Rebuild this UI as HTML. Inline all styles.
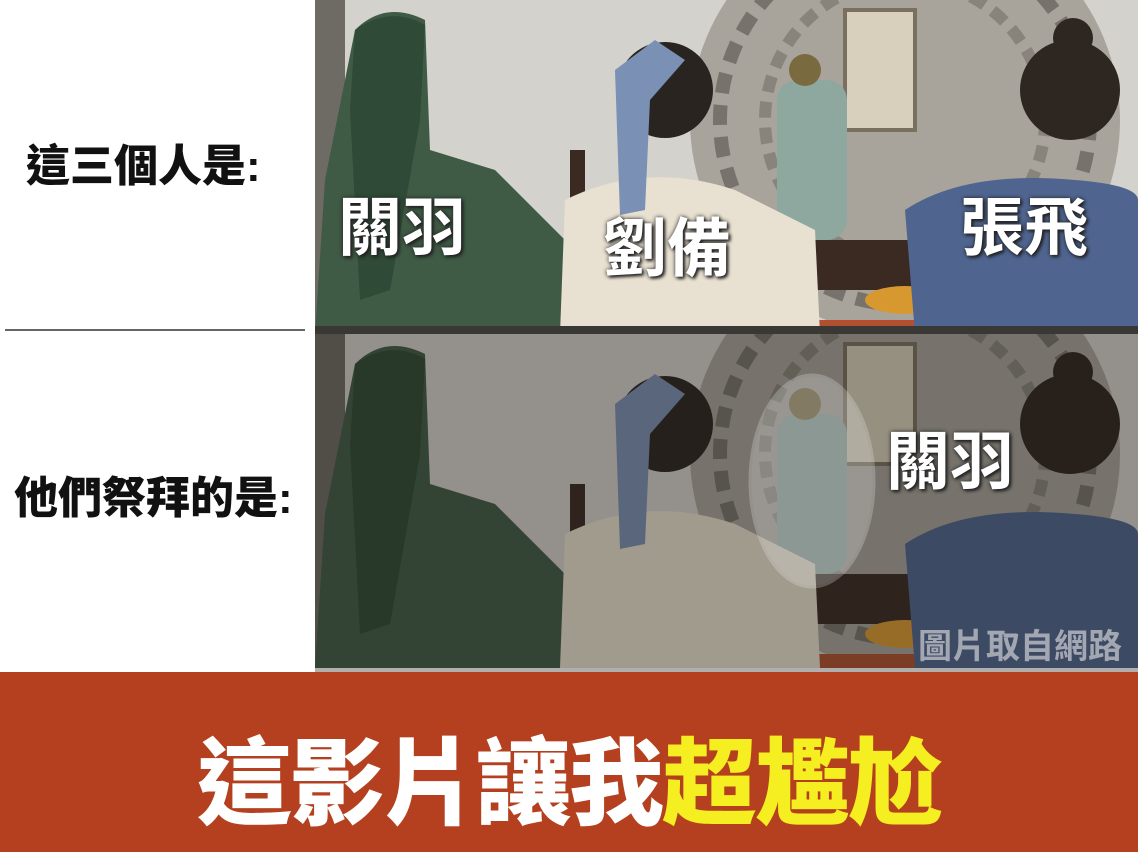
<!DOCTYPE html>
<html><head><meta charset="utf-8"><style>
html,body{margin:0;padding:0;}
body{width:1138px;height:852px;position:relative;overflow:hidden;background:#fff;font-family:"Liberation Sans","Noto Sans CJK TC",sans-serif;}
.lt{position:absolute;font-weight:900;color:#111;font-size:44px;line-height:1;white-space:nowrap;}
.lab{position:absolute;color:#fff;font-weight:700;font-size:64px;line-height:1;white-space:nowrap;text-shadow:0 0 4px #222,2px 2px 3px #222;}
.ban{position:absolute;left:0;top:672px;width:1138px;height:180px;background:#b5401f;}
.bt{position:absolute;left:0;width:1138px;top:738px;text-align:center;font-size:95px;font-weight:900;line-height:1;color:#fff;letter-spacing:-2px;white-space:nowrap;}
</style></head><body>
<div class="lt" style="left:26px;top:145px;">這三個人是:</div>
<div style="position:absolute;left:5px;top:329px;width:300px;height:2px;background:#666;"></div>
<div class="lt" style="left:14px;top:477px;">他們祭拜的是:</div>

<svg width="823" height="672" style="position:absolute;left:315px;top:0" viewBox="0 0 823 672">
<defs>
<clipPath id="cp"><rect x="0" y="0" width="823" height="334"/></clipPath>
<g id="scene">
<rect x="0" y="0" width="823" height="334" fill="#d4d2cc"/>
<rect x="0" y="0" width="30" height="334" fill="#6e6a64"/>
<circle cx="590" cy="120" r="215" fill="#a8a49c"/>
<circle cx="590" cy="120" r="185" fill="none" stroke="#77736c" stroke-width="14" stroke-dasharray="20 12"/>
<circle cx="590" cy="120" r="140" fill="none" stroke="#88847c" stroke-width="12" stroke-dasharray="16 10"/>
<rect x="530" y="10" width="70" height="120" fill="#d8d0bc" stroke="#7a7060" stroke-width="4"/>
<rect x="490" y="240" width="160" height="50" fill="#3a2a22"/>
<rect x="180" y="320" width="500" height="14" fill="#b05030"/>
<ellipse cx="590" cy="300" rx="40" ry="14" fill="#d89830"/>
<rect x="462" y="80" width="70" height="160" rx="20" fill="#8ea8a0"/>
<circle cx="490" cy="70" r="16" fill="#7a6a40"/>
<rect x="255" y="150" width="15" height="60" fill="#3a2a22"/>
<path d="M40 30 Q70 0 110 20 L115 150 L180 170 L250 240 L245 334 L0 334 L10 180 Z" fill="#3f5a45"/>
<path d="M40 30 Q75 5 110 25 L105 120 L75 290 L45 300 L35 110 Z" fill="#2f4a36"/>
<circle cx="350" cy="90" r="48" fill="#2a2420"/>
<path d="M250 200 Q330 160 420 190 L500 230 L505 334 L245 334 Z" fill="#e8e0d0"/>
<path d="M300 70 L340 40 L370 60 L335 100 L330 210 L305 215 Z" fill="#7a90b4"/>
<path d="M590 210 Q650 170 760 180 Q823 185 823 200 L823 334 L600 334 Z" fill="#4f6590"/>
<circle cx="755" cy="90" r="50" fill="#2e2620"/>
<circle cx="758" cy="38" r="20" fill="#2e2620"/>
</g>
</defs>
<g clip-path="url(#cp)"><use href="#scene"/></g>
<rect x="0" y="326" width="823" height="8" fill="#3a3834"/>
<g transform="translate(0,334)"><g clip-path="url(#cp)"><use href="#scene"/></g><rect x="0" y="0" width="823" height="338" fill="#1c1a14" opacity="0.35"/></g>
<ellipse cx="497" cy="481" rx="62" ry="106" fill="#fff" opacity="0.25" stroke="#eee" stroke-width="3"/>
</svg>

<div class="lab" style="left:338px;top:196px;">關羽</div>
<div class="lab" style="left:603px;top:217px;">劉備</div>
<div class="lab" style="left:960px;top:196px;">張飛</div>
<div class="lab" style="left:886px;top:430px;">關羽</div>
<div style="position:absolute;left:918px;top:630px;font-size:34px;font-weight:700;color:rgba(230,230,230,0.6);line-height:1;white-space:nowrap;">圖片取自網路</div>

<div class="ban"></div>
<div class="bt">這影片讓我<span style="color:#f5ee20">超尷尬</span></div>
</body></html>
